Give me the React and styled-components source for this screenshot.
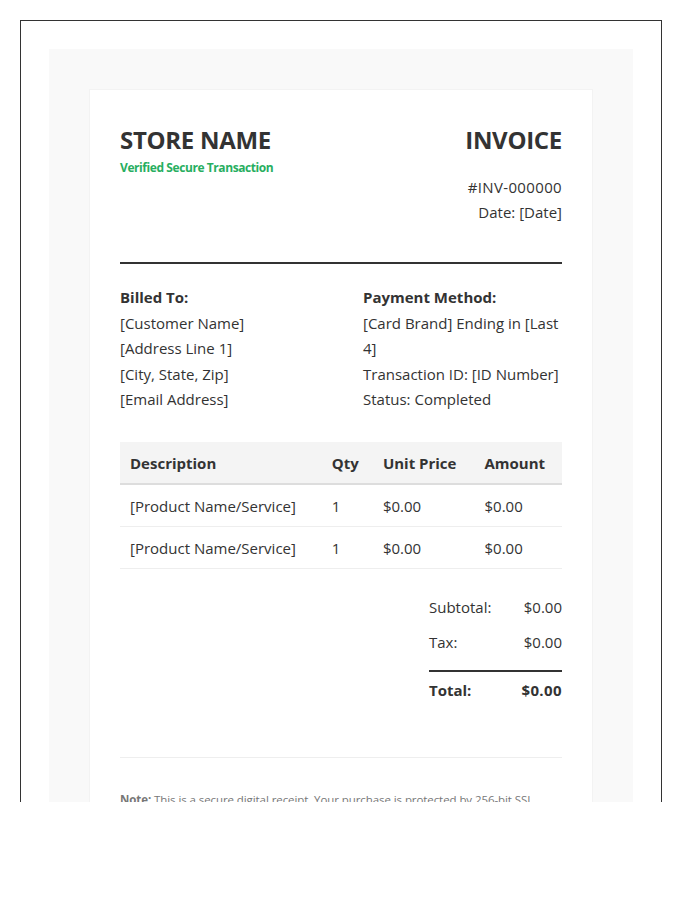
import styled, { createGlobalStyle } from "styled-components";

const GlobalStyle = createGlobalStyle`
  html, body { margin: 0; padding: 0; background: #fff; }
  body {
    font-family: "Open Sans", "Noto Sans", sans-serif;
    font-size: 15px;
    line-height: 25.5px;
    color: #333;
  }
`;

const Clip = styled.div`
  margin: 20px 0 0 20px;
  width: 642px;
  height: 782px;
  overflow: hidden;
`;

const Frame = styled.div`
  box-sizing: border-box;
  border: 1px solid #333;
  padding: 28px;
`;

const Backdrop = styled.div`
  background: #f9f9f9;
  padding: 40px;
`;

const Card = styled.div`
  background: #fff;
  padding: 34px 30px 30px;
  border: 1px solid #f3f3f3;
`;

const Header = styled.header`
  display: flex;
  justify-content: space-between;
  align-items: flex-start;
  padding-bottom: 37px;
  border-bottom: 2px solid #333;
  margin-bottom: 21px;
`;

const Title = styled.h1`
  margin: 0;
  font-size: 24px;
  line-height: 32px;
  font-weight: 700;
  letter-spacing: -0.3px;
  color: #333;
`;

const Verified = styled.div`
  font-size: 12px;
  line-height: 16px;
  font-weight: 700;
  letter-spacing: -0.42px;
  color: #27ae60;
  margin-top: 4px;
`;

const InvoiceMeta = styled.div`
  text-align: right;
`;

const InvoiceNumber = styled.div`
  margin-top: 19px;
  line-height: 24.5px;
  letter-spacing: 0.35px;
`;

const Parties = styled.section`
  display: grid;
  grid-template-columns: 1fr 1fr;
  column-gap: 44px;
  margin-bottom: 29px;
`;

const Label = styled.strong`
  display: block;
  font-weight: 700;
`;

const Table = styled.table`
  width: 100%;
  border-collapse: collapse;
  margin-bottom: 21px;
  line-height: 25px;
`;

const Th = styled.th`
  text-align: left;
  font-weight: 700;
  padding: 9px 10px 7px;
  background: #f4f4f4;
  border-bottom: 2px solid #ddd;
`;

const Td = styled.td`
  padding: 9px 10px 7px;
  border-bottom: 1px solid #eee;
`;

const Totals = styled.div`
  width: 133px;
  margin-left: auto;
`;

const TotalRow = styled.div`
  display: flex;
  justify-content: space-between;
  padding: 5px 0;
`;

const GrandTotal = styled(TotalRow)`
  margin-top: 9px;
  padding-top: 6px;
  font-weight: 700;
  border-top: 2px solid #333;
`;

const GrandAmount = styled.span`
  letter-spacing: 0.4px;
`;

const Footer = styled.footer`
  margin-top: 49px;
  padding-top: 33px;
  border-top: 1px solid #eee;
  font-size: 11.5px;
  line-height: 18px;
  letter-spacing: -0.08px;
  color: #777;
`;

const rows = [
  { name: "[Product Name/Service]", qty: 1, price: "$0.00", amount: "$0.00" },
  { name: "[Product Name/Service]", qty: 1, price: "$0.00", amount: "$0.00" },
];

export default function App() {
  return (
    <>
      <GlobalStyle />
      <Clip>
        <Frame>
          <Backdrop>
            <Card>
              <Header>
                <div>
                  <Title>STORE NAME</Title>
                  <Verified>Verified Secure Transaction</Verified>
                </div>
                <InvoiceMeta>
                  <Title>INVOICE</Title>
                  <InvoiceNumber>#INV-000000</InvoiceNumber>
                  <div>Date: [Date]</div>
                </InvoiceMeta>
              </Header>
              <Parties>
                <div>
                  <Label>Billed To:</Label>
                  [Customer Name]<br />
                  [Address Line 1]<br />
                  [City, State, Zip]<br />
                  [Email Address]
                </div>
                <div>
                  <Label>Payment Method:</Label>
                  [Card Brand] Ending in [Last 4]<br />
                  Transaction ID: [ID Number]<br />
                  Status: Completed
                </div>
              </Parties>
              <Table>
                <thead>
                  <tr>
                    <Th>Description</Th>
                    <Th>Qty</Th>
                    <Th>Unit Price</Th>
                    <Th>Amount</Th>
                  </tr>
                </thead>
                <tbody>
                  {rows.map((row, i) => (
                    <tr key={i}>
                      <Td>{row.name}</Td>
                      <Td>{row.qty}</Td>
                      <Td>{row.price}</Td>
                      <Td>{row.amount}</Td>
                    </tr>
                  ))}
                </tbody>
              </Table>
              <Totals>
                <TotalRow><span>Subtotal:</span><span>$0.00</span></TotalRow>
                <TotalRow><span>Tax:</span><span>$0.00</span></TotalRow>
                <GrandTotal><span>Total:</span><GrandAmount>$0.00</GrandAmount></GrandTotal>
              </Totals>
              <Footer>
                <strong>Note:</strong> This is a secure digital receipt. Your purchase is protected by 256-bit SSL encryption. Please keep this receipt for your records.
              </Footer>
            </Card>
          </Backdrop>
        </Frame>
      </Clip>
    </>
  );
}
